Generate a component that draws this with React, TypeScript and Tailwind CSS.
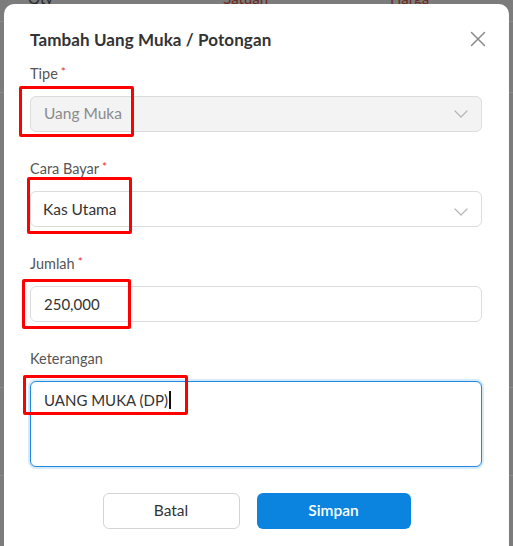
import React from "react";

function Chevron() {
  return (
    <svg width="14" height="8" viewBox="0 0 14 8" fill="none" className="shrink-0">
      <path d="M1 1l6 6 6-6" stroke="#b5b5b5" strokeWidth="1.2" strokeLinecap="round" strokeLinejoin="round" />
    </svg>
  );
}

function Label({ text, required }: { text: string; required?: boolean }) {
  return (
    <div className="h-5 mb-3 flex items-start text-[14.5px] leading-5 text-[#555]">
      <span>{text}</span>
      {required && <span className="ml-[3px] text-[#e5322d] text-[12px] leading-4">*</span>}
    </div>
  );
}

export default function App() {
  return (
    <div
      className="relative h-[546px] w-[513px] overflow-hidden bg-[#7c7c7c]"
      style={{ fontFamily: "Lato, 'Noto Sans', sans-serif" }}
    >
      {/* background page under overlay */}
      <div className="flex h-[21px] items-start overflow-hidden text-[15px] leading-none text-[#2a2a2a]">
        <span className="ml-[28px] -mt-[9px]">Qty</span>
        <span className="ml-[170px] -mt-[9px] text-[#6b2a20]">Satuan</span>
        <span className="ml-[122px] -mt-[9px] text-[#6b2a20]">Harga</span>
      </div>
      <div className="h-px bg-[#8a8a8a]" />
      <div className="mt-[70px] h-px bg-[#8a8a8a]" />
      <div className="mt-[294px] h-px bg-[#8a8a8a]" />
      <div className="mt-[87px] h-px bg-[#8a8a8a]" />

      {/* modal */}
      <div className="absolute left-[4px] top-[4px] w-[505px] h-[570px] rounded-[10px] bg-white px-[26px] pt-[24px]">
        <button className="absolute right-[23px] top-[27px] p-0">
          <svg width="16" height="16" viewBox="0 0 16 16" fill="none">
            <path d="M1.5 1.5l13 13M14.5 1.5l-13 13" stroke="#8a8a8a" strokeWidth="1.5" strokeLinecap="round" />
          </svg>
        </button>
        <h2 className="h-6 text-[17px] leading-6 font-bold text-[#333] tracking-[0.1px]">
          Tambah Uang Muka / Potongan
        </h2>

        <div className="mt-3 flex flex-col gap-[27px] pr-[1px]">
          <div>
            <Label text="Tipe" required />
            <div className="flex h-[36px] items-center justify-between rounded-[6px] border border-[#dcdcdc] bg-[#f3f3f3] pl-[13px] pr-[13px] text-[15.5px] text-[#8a8a8a]">
              <span>Uang Muka</span>
              <Chevron />
            </div>
          </div>
          <div>
            <Label text="Cara Bayar" required />
            <div className="flex h-[36px] items-center justify-between rounded-[6px] border border-[#dcdcdc] bg-white pl-[12px] pr-[13px] text-[15.5px] text-[#333]">
              <span className="mt-[2px]">Kas Utama</span>
              <span className="mt-[6px]"><Chevron /></span>
            </div>
          </div>
          <div>
            <Label text="Jumlah" required />
            <div className="flex h-[36px] items-center rounded-[6px] border border-[#dcdcdc] bg-white pl-[13px] text-[15px] text-[#333]">
              <span>250,000</span>
            </div>
          </div>
          <div>
            <Label text="Keterangan" />
            <div className="h-[86px] rounded-[6px] border border-[#2088e0] bg-white pl-[13px] pt-[7px] text-[15px] text-[#333] shadow-[0_0_0_2px_rgba(32,136,224,0.18)]">
              <span className="inline-flex items-center">
                UANG MUKA (DP)
                <span className="ml-[1px] inline-block h-[18px] w-[2px] bg-[#111]" />
              </span>
            </div>
          </div>
        </div>

        <div className="mt-[26px] flex justify-center gap-[17px]">
          <button className="h-[36px] w-[137px] rounded-[6px] border border-[#d4d4d4] bg-white text-[15.5px] text-[#333]">
            Batal
          </button>
          <button className="h-[36px] w-[154px] rounded-[6px] bg-[#0a84df] text-[15.5px] font-semibold text-white">
            Simpan
          </button>
        </div>
      </div>

      {/* red annotation boxes */}
      <div className="absolute left-[19px] top-[86px] h-[51px] w-[115px] rounded-[2px] border-[3px] border-[#f00]" />
      <div className="absolute left-[27px] top-[177px] h-[57px] w-[105px] rounded-[2px] border-[3px] border-[#f00]" />
      <div className="absolute left-[22px] top-[279px] h-[50px] w-[109px] rounded-[2px] border-[3px] border-[#f00]" />
      <div className="absolute left-[23px] top-[375px] h-[40px] w-[165px] rounded-[2px] border-[3px] border-[#f00]" />
    </div>
  );
}
